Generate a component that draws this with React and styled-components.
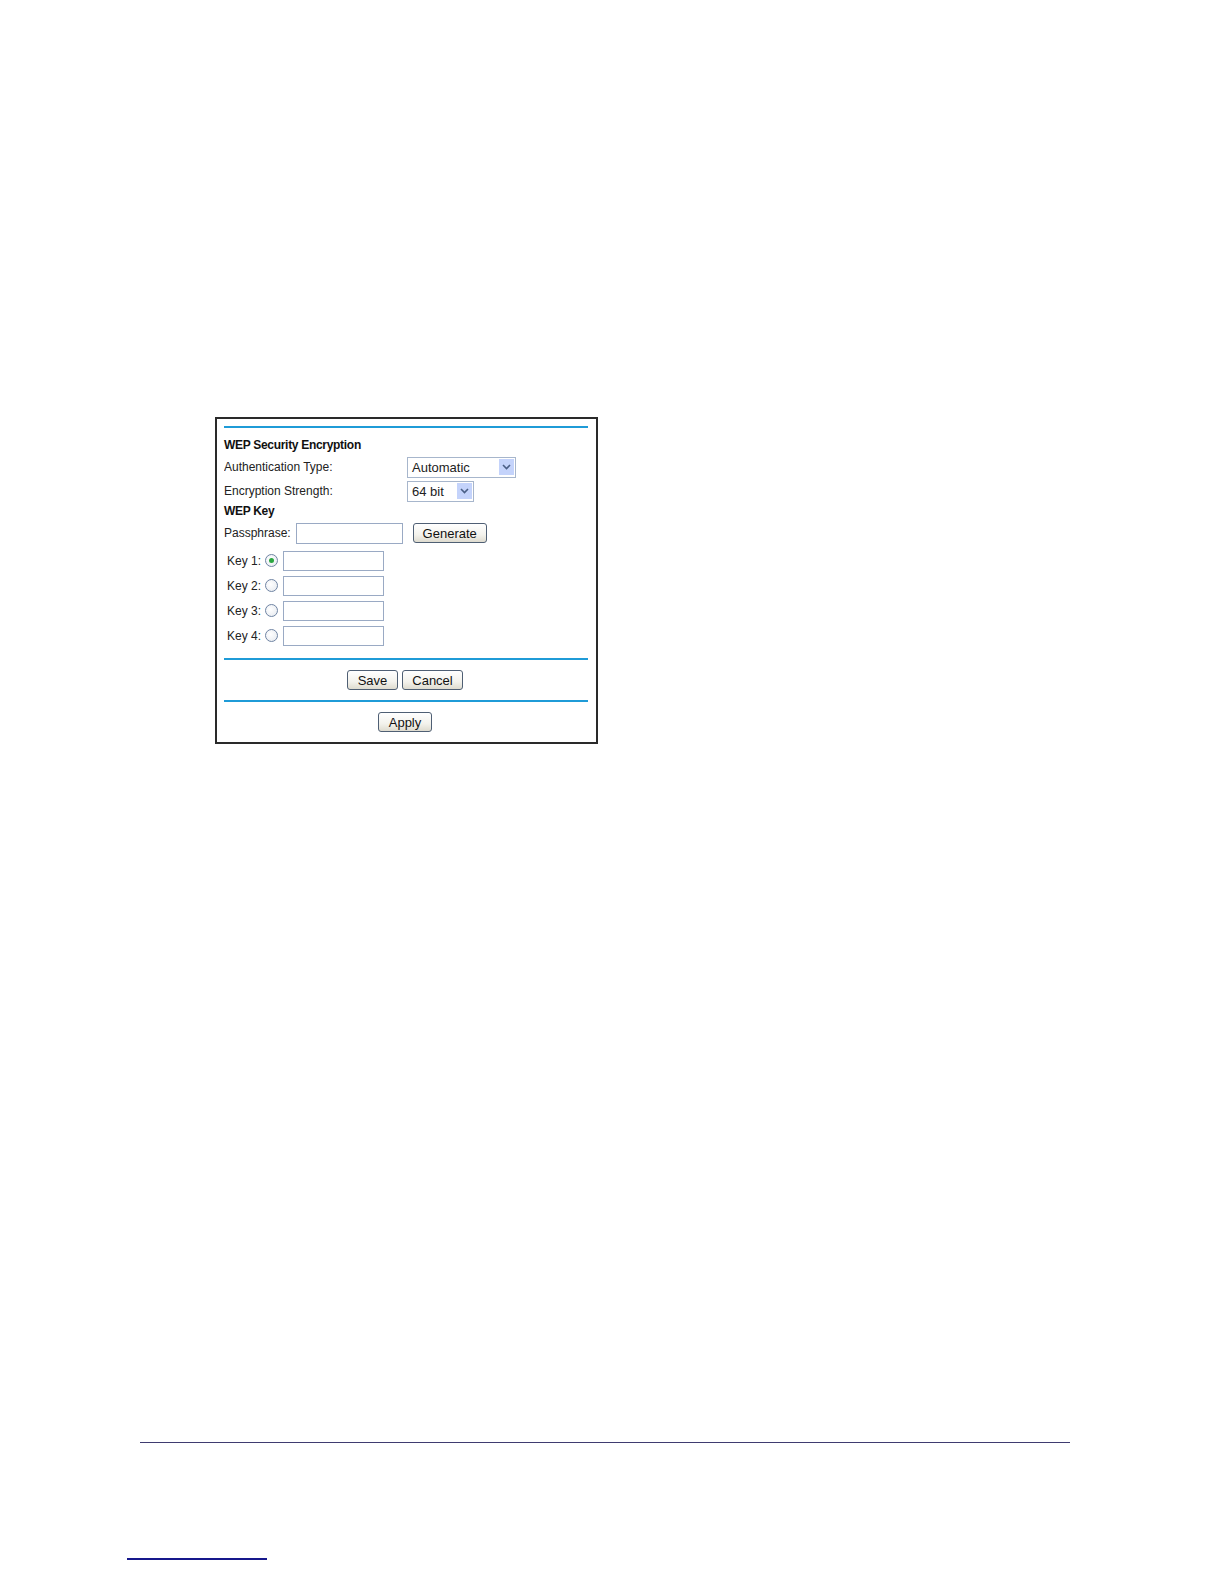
import styled, { createGlobalStyle } from "styled-components"

const GlobalStyle = createGlobalStyle`
  html, body {
    margin: 0;
    padding: 0;
    background: #ffffff;
    overflow: hidden;
  }
  body {
    font-family: "Liberation Sans", Arial, sans-serif;
    color: #1a1a1a;
  }
`

const Page = styled.div`
  width: 100%;
  height: 100vh;
  display: flex;
  flex-direction: column;
  padding-top: 417px;
  box-sizing: border-box;
  overflow: hidden;
`

const Panel = styled.div`
  margin-left: 215px;
  width: 383px;
  height: 327px;
  box-sizing: border-box;
  border: 2px solid #2a2a2a;
  padding: 7px 8px 0 7px;
  display: flex;
  flex-direction: column;
`

const Rule = styled.div`
  height: 2px;
  background: #1f9bd7;
  margin-top: ${p => p.top || 0}px;
  flex-shrink: 0;
`

const Heading = styled.div`
  height: ${p => p.h}px;
  margin-top: ${p => p.top || 0}px;
  display: flex;
  align-items: center;
  font-size: 12px;
  font-weight: bold;
  letter-spacing: -0.3px;
  color: #111;
`

const Row = styled.div`
  height: ${p => p.h}px;
  margin-top: ${p => p.top || 0}px;
  padding-left: ${p => p.indent || 0}px;
  display: flex;
  align-items: center;
`

const Label = styled.span`
  font-size: 12px;
  color: #222;
  width: ${p => (p.w ? `${p.w}px` : "auto")};
  flex-shrink: 0;
  white-space: nowrap;
  overflow: hidden;
`

const Select = styled.div`
  width: ${p => p.w}px;
  height: 21px;
  box-sizing: border-box;
  border: 1px solid #a7b6cc;
  display: flex;
  align-items: center;
  justify-content: space-between;
  padding: 0 1px 0 4px;
  font-size: 13px;
  color: #222;
  background: #fff;
`

const Arrow = styled.span`
  width: 15px;
  height: 16px;
  background: #c4d3fb;
  display: flex;
  align-items: center;
  justify-content: center;
`

const TextInput = styled.div`
  width: ${p => p.w}px;
  height: ${p => p.h}px;
  box-sizing: border-box;
  border: 1px solid #9aaac4;
  background: #fff;
  margin-left: ${p => p.gap || 0}px;
`

const Button = styled.button`
  height: 20px;
  width: ${p => p.w}px;
  margin-left: ${p => p.gap || 0}px;
  box-sizing: border-box;
  padding: 0;
  border: 1px solid #4f5f74;
  border-radius: 3px;
  background: linear-gradient(#ffffff 0%, #f3f2ec 60%, #dedbcf 100%);
  font-family: "Liberation Sans", Arial, sans-serif;
  font-size: 13px;
  color: #111;
  line-height: 17px;
`

const ButtonRow = styled.div`
  height: 40px;
  display: flex;
  align-items: center;
  justify-content: center;
  padding-right: 2px;
`

const Radio = styled.span`
  width: 13px;
  height: 13px;
  box-sizing: border-box;
  border-radius: 50%;
  border: 1px solid #6f84a3;
  background: radial-gradient(circle at 40% 40%, #ffffff, #e4e8ee);
  margin-left: 4px;
  display: flex;
  align-items: center;
  justify-content: center;
  flex-shrink: 0;
  &::after {
    content: "";
    width: 5px;
    height: 5px;
    border-radius: 50%;
    background: ${p => (p.checked ? "#2aa640" : "transparent")};
  }
`

const FooterRule = styled.div`
  margin-top: 698px;
  margin-left: 140px;
  width: 930px;
  height: 1px;
  flex-shrink: 0;
  background: #3f3b70;
`

const BottomRule = styled.div`
  margin-top: 115px;
  margin-left: 127px;
  width: 140px;
  height: 2px;
  flex-shrink: 0;
  background: #16188c;
`

const Chevron = () => (
  <svg width="9" height="6" viewBox="0 0 9 6">
    <path d="M1 1 L4.5 4.5 L8 1" fill="none" stroke="#4a5f86" strokeWidth="1.6" />
  </svg>
)

const keys = [1, 2, 3, 4]

const App = () => {
  return (
    <>
      <GlobalStyle />
      <Page>
        <Panel>
          <Rule />
          <Heading h={18} top={8}>WEP Security Encryption</Heading>
          <Row h={24} top={1}>
            <Label w={183}>Authentication Type:</Label>
            <Select w={109}>
              Automatic
              <Arrow><Chevron /></Arrow>
            </Select>
          </Row>
          <Row h={24}>
            <Label w={183}>Encryption Strength:</Label>
            <Select w={67}>
              64 bit
              <Arrow><Chevron /></Arrow>
            </Select>
          </Row>
          <Heading h={16}>WEP Key</Heading>
          <Row h={24} top={2}>
            <Label>Passphrase:</Label>
            <TextInput w={107} h={21} gap={5} />
            <Button w={74} gap={10}>Generate</Button>
          </Row>
          <div style={{ height: 3 }} />
          {keys.map(k => (
            <Row h={25} indent={3} key={k}>
              <Label>Key {k}:</Label>
              <Radio checked={k === 1} />
              <TextInput w={101} h={20} gap={5} />
            </Row>
          ))}
          <Rule top={10} />
          <ButtonRow>
            <Button w={51}>Save</Button>
            <Button w={61} gap={4}>Cancel</Button>
          </ButtonRow>
          <Rule />
          <ButtonRow>
            <Button w={54}>Apply</Button>
          </ButtonRow>
        </Panel>
        <FooterRule />
        <BottomRule />
      </Page>
    </>
  )
}

export default App
